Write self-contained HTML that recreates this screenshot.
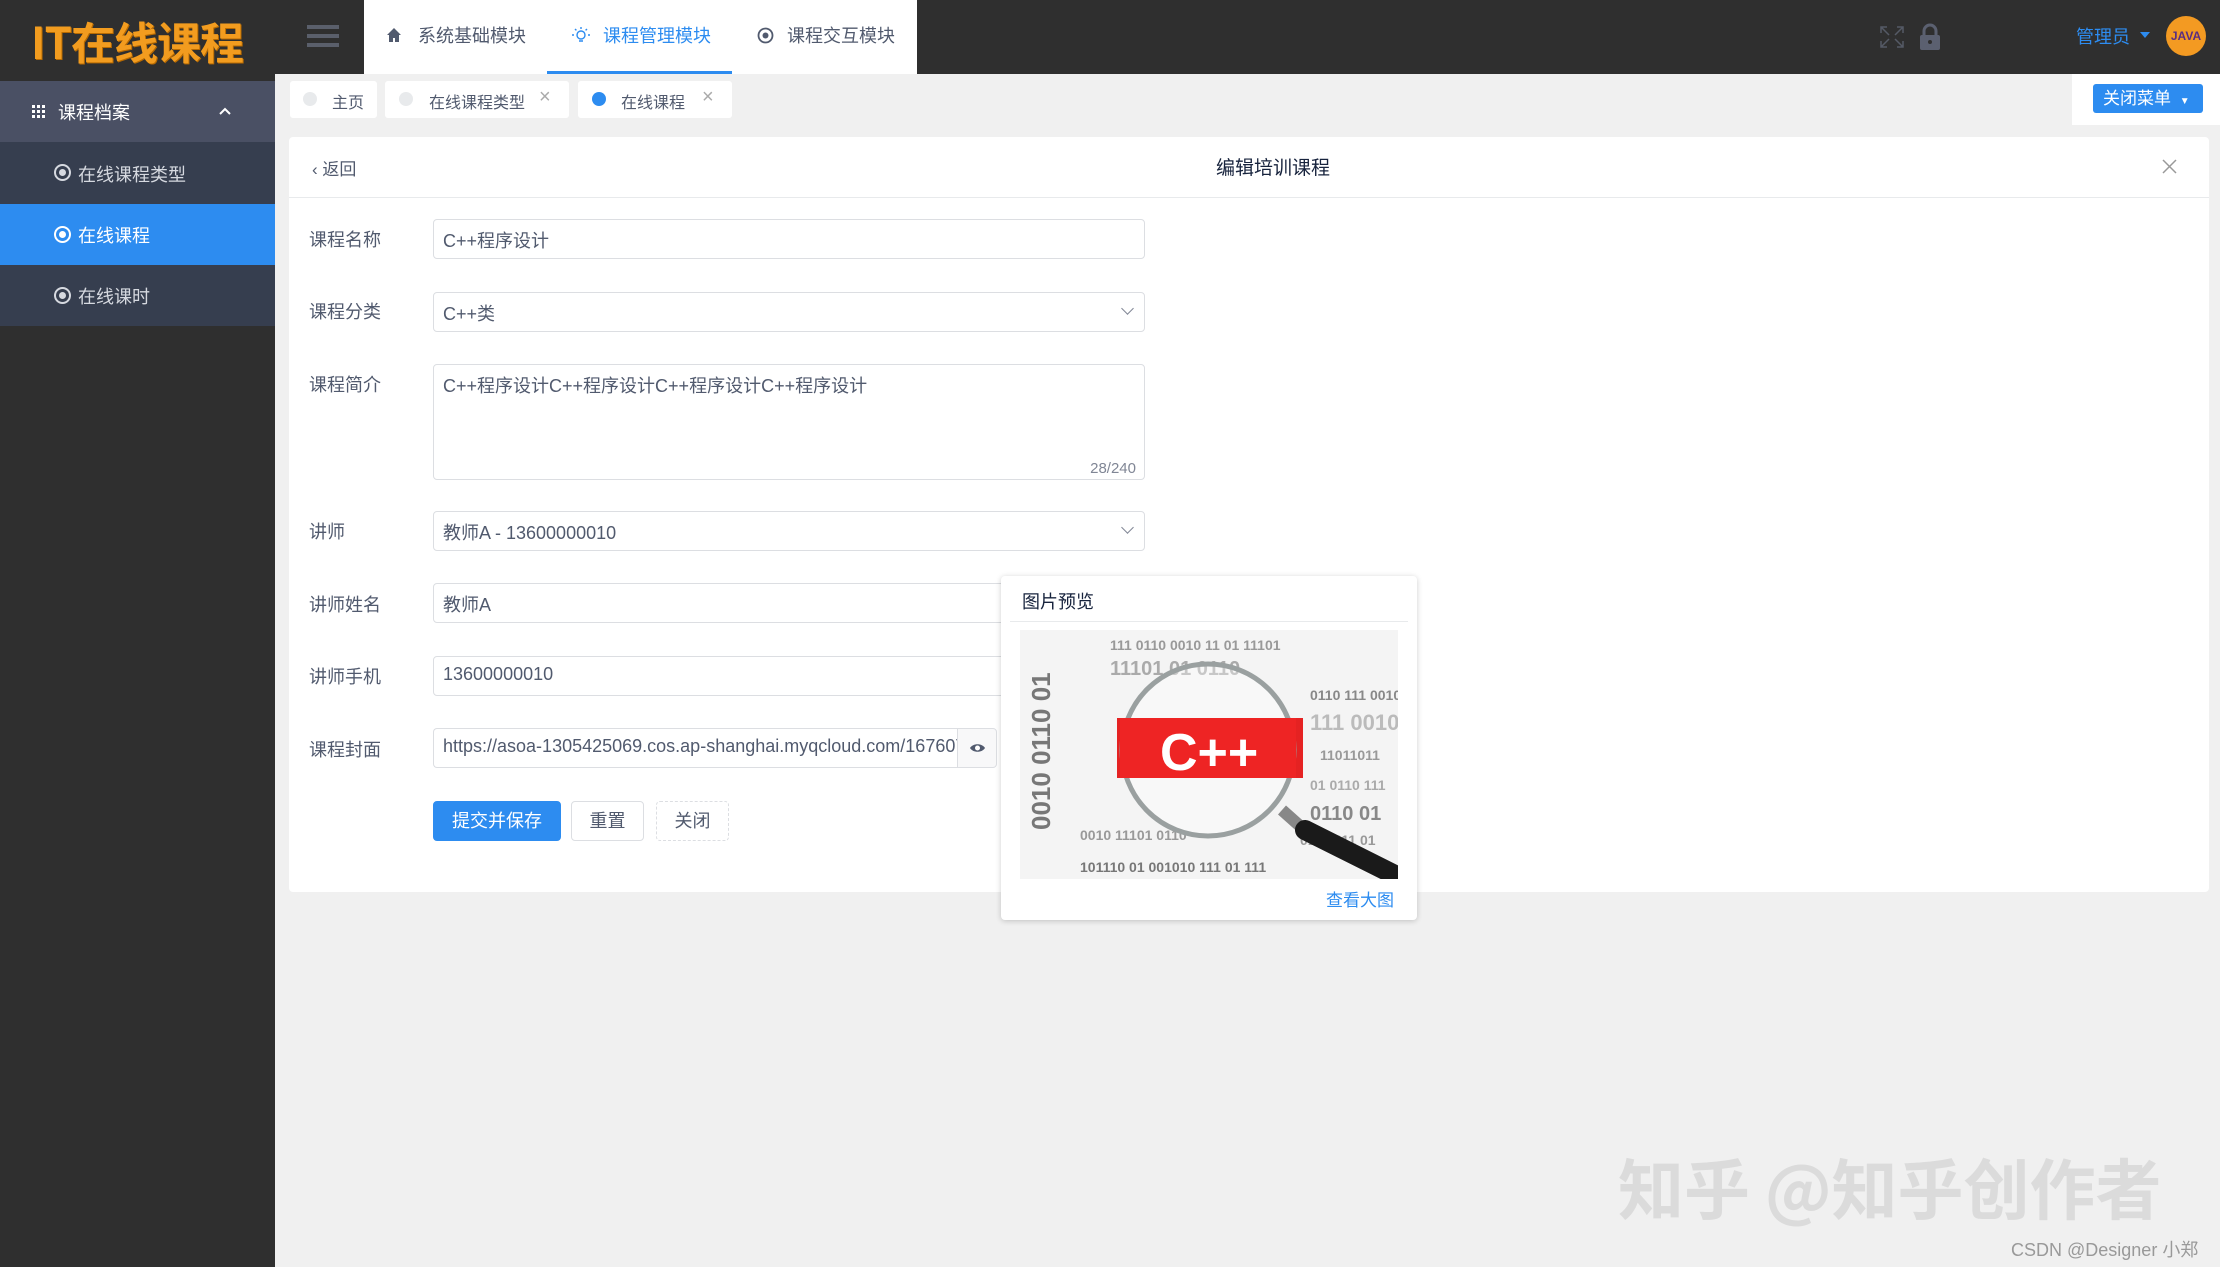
<!DOCTYPE html>
<html><head><meta charset="utf-8"><style>
*{box-sizing:border-box;margin:0;padding:0}
body{width:2220px;height:1267px;overflow:hidden;background:#f0f0f0;font-family:"Liberation Sans","Noto Sans CJK SC",sans-serif;position:relative;color:#515a6e}
.abs{position:absolute}
.hdr{left:0;top:0;width:2220px;height:74px;background:#2f2f2f}
.side{left:0;top:74px;width:275px;height:1193px;background:#2f2f2f}
.logo{left:31px;top:8px;font-size:44px;font-weight:bold;color:#f29c1f;letter-spacing:-1px;font-family:"Noto Sans CJK SC",sans-serif;text-shadow:1px 1px 0 #b86a00}
.nav{left:364px;top:0;width:553px;height:74px;background:#fff}
.nav span{position:absolute;top:22px;font-size:18px;color:#515a6e}
.menu{left:0;width:275px;color:#fff;font-size:18px}
.ic{position:absolute;left:54px;top:22px;width:17px;height:17px;border-radius:50%;border:2px solid currentColor}
.ic:after{content:"";position:absolute;left:3px;top:3px;width:7px;height:7px;border-radius:50%;background:currentColor}
.tab{top:81px;height:37px;background:#fff;border-radius:3px;font-size:16px;color:#515a6e}
.inp{left:433px;width:712px;height:40px;border:1px solid #dcdee2;border-radius:4px;background:#fff;font-size:18px;color:#515a6e;padding:7px 9px}
.lbl{left:309px;font-size:18px;color:#515a6e}
.dd{position:absolute;right:12px;top:11px;width:9px;height:9px;border-right:1.5px solid #808695;border-bottom:1.5px solid #808695;transform:rotate(45deg)}
.btn{top:801px;height:40px;border:1px solid #dcdee2;border-radius:4px;font-size:18px;text-align:center;line-height:38px;background:#fff;color:#515a6e}
</style></head><body>
<div class="abs hdr"></div>
<div class="abs side"></div>
<div class="abs logo">IT在线课程</div>
<div class="abs" style="left:307px;top:25px;width:32px;height:4px;background:#5a5f6b;box-shadow:0 9px 0 #5a5f6b,0 18px 0 #5a5f6b"></div>
<div class="abs nav">
 <svg style="position:absolute;left:22px;top:27px" width="16" height="16" viewBox="0 0 16 16"><path d="M8 1L1 8h2v7h4v-4h2v4h4V8h2z" fill="#515a6e"/></svg>
 <span style="left:54px">系统基础模块</span>
 <svg style="position:absolute;left:208px;top:26px" width="18" height="20" viewBox="0 0 18 20"><circle cx="9" cy="9" r="4" fill="none" stroke="#2d8cf0" stroke-width="1.4"/><path d="M7 15h4M9 1v2M2 9H0M18 9h-2M3 3l1.4 1.4M15 3l-1.4 1.4" stroke="#2d8cf0" stroke-width="1.4"/></svg>
 <span style="left:239px;color:#2d8cf0">课程管理模块</span>
 <div style="position:absolute;left:183px;top:71px;width:185px;height:3px;background:#2d8cf0"></div>
 <svg style="position:absolute;left:393px;top:27px" width="17" height="17" viewBox="0 0 17 17"><circle cx="8.5" cy="8.5" r="7" fill="none" stroke="#515a6e" stroke-width="1.8"/><circle cx="8.5" cy="8.5" r="3" fill="#515a6e"/></svg>
 <span style="left:423px">课程交互模块</span>
</div>
<svg class="abs" style="left:1879px;top:25px" width="26" height="24" viewBox="0 0 26 24"><path d="M2 8V2h6M24 8V2h-6M2 16v6h6M24 16v6h-6M2 2l8 8M24 2l-8 8M2 22l8-8M24 22l-8-8" stroke="#555a66" stroke-width="1.5" fill="none"/></svg>
<svg class="abs" style="left:1919px;top:23px" width="22" height="28" viewBox="0 0 22 28"><path d="M5 12V8a6 6 0 0 1 12 0v4" stroke="#5b6070" stroke-width="3" fill="none"/><rect x="1" y="12" width="20" height="15" rx="2" fill="#5b6070"/><circle cx="11" cy="19" r="2" fill="#2f2f2f"/></svg>
<div class="abs" style="left:2076px;top:23px;font-size:18px;color:#2d8cf0">管理员</div>
<div class="abs" style="left:2140px;top:32px;border:5px solid transparent;border-top:6px solid #2d8cf0"></div>
<div class="abs" style="left:2166px;top:16px;width:40px;height:40px;border-radius:50%;background:#f39a22;color:#5a2d82;font-size:12px;font-weight:bold;text-align:center;line-height:40px">JAVA</div>

<div class="abs menu" style="top:81px;height:61px;background:#4a5064"><svg style="position:absolute;left:32px;top:24px" width="13" height="13" viewBox="0 0 13 13" fill="#fff"><rect x="0" y="0" width="3" height="3"/><rect x="5" y="0" width="3" height="3"/><rect x="10" y="0" width="3" height="3"/><rect x="0" y="5" width="3" height="3"/><rect x="5" y="5" width="3" height="3"/><rect x="10" y="5" width="3" height="3"/><rect x="0" y="10" width="3" height="3"/><rect x="5" y="10" width="3" height="3"/><rect x="10" y="10" width="3" height="3"/></svg><span style="position:absolute;left:58px;top:18px">课程档案</span><svg style="position:absolute;left:219px;top:26px" width="12" height="8" viewBox="0 0 12 8"><path d="M1 7l5-5 5 5" stroke="#fff" stroke-width="2" fill="none"/></svg></div>
<div class="abs menu" style="top:142px;height:62px;background:#363e4f;color:#d6d9e0"><i class="ic"></i><span style="position:absolute;left:78px;top:19px">在线课程类型</span></div>
<div class="abs menu" style="top:204px;height:61px;background:#2d8cf0"><i class="ic"></i><span style="position:absolute;left:78px;top:18px">在线课程</span></div>
<div class="abs menu" style="top:265px;height:61px;background:#363e4f;color:#d6d9e0"><i class="ic"></i><span style="position:absolute;left:78px;top:18px">在线课时</span></div>

<div class="abs tab" style="left:290px;width:87px"><i class="abs" style="left:13px;top:11px;width:14px;height:14px;border-radius:50%;background:#e8eaec"></i><span class="abs" style="left:42px;top:8px">主页</span></div>
<div class="abs tab" style="left:385px;width:184px"><i class="abs" style="left:14px;top:11px;width:14px;height:14px;border-radius:50%;background:#e8eaec"></i><span class="abs" style="left:44px;top:8px">在线课程类型</span><span class="abs" style="left:154px;top:5px;color:#aaa;font-size:20px">×</span></div>
<div class="abs tab" style="left:578px;width:154px"><i class="abs" style="left:14px;top:11px;width:14px;height:14px;border-radius:50%;background:#2d8cf0"></i><span class="abs" style="left:43px;top:8px">在线课程</span><span class="abs" style="left:124px;top:5px;color:#aaa;font-size:20px">×</span></div>
<div class="abs" style="left:2072px;top:74px;width:148px;height:51px;background:#fff"></div>
<div class="abs" style="left:2093px;top:84px;width:110px;height:29px;background:#2d8cf0;border-radius:3px;color:#fff;font-size:17px;line-height:29px;padding-left:10px">关闭菜单 <span style="font-size:10px;margin-left:4px">▼</span></div>

<div class="abs" style="left:289px;top:137px;width:1920px;height:755px;background:#fff;border-radius:4px"></div>
<div class="abs" style="left:289px;top:197px;width:1920px;height:1px;background:#e8eaec"></div>
<div class="abs" style="left:312px;top:155px;font-size:17px;color:#515a6e">‹ 返回</div>
<div class="abs" style="left:1216px;top:153px;font-size:19px;color:#17233d">编辑培训课程</div>
<svg class="abs" style="left:2162px;top:159px" width="15" height="15" viewBox="0 0 15 15"><path d="M1 1l13 13M14 1L1 14" stroke="#999" stroke-width="1.5"/></svg>

<div class="abs lbl" style="top:226px">课程名称</div><div class="abs inp" style="top:219px">C++程序设计</div>
<div class="abs lbl" style="top:298px">课程分类</div><div class="abs inp" style="top:292px">C++类<i class="dd"></i></div>
<div class="abs lbl" style="top:371px">课程简介</div><div class="abs inp" style="top:364px;height:116px">C++程序设计C++程序设计C++程序设计C++程序设计<span class="abs" style="right:8px;bottom:2px;font-size:15px;color:#808695">28/240</span></div>
<div class="abs lbl" style="top:518px">讲师</div><div class="abs inp" style="top:511px">教师A - 13600000010<i class="dd"></i></div>
<div class="abs lbl" style="top:591px">讲师姓名</div><div class="abs inp" style="top:583px">教师A</div>
<div class="abs lbl" style="top:663px">讲师手机</div><div class="abs inp" style="top:656px">13600000010</div>
<div class="abs lbl" style="top:736px">课程封面</div><div class="abs inp" style="top:728px;width:525px;white-space:nowrap;overflow:hidden;border-radius:4px 0 0 4px;border-right:none">https://asoa-1305425069.cos.ap-shanghai.myqcloud.com/167607</div>
<div class="abs" style="left:957px;top:728px;width:40px;height:40px;border:1px solid #dcdee2;background:#f8f8f9;border-radius:0 4px 4px 0">
<svg style="position:absolute;left:11px;top:13px" width="17" height="12" viewBox="0 0 17 12"><path d="M1 6C4 1 13 1 16 6C13 11 4 11 1 6z" fill="#515a6e"/><circle cx="8.5" cy="6" r="2.5" fill="#fff"/></svg></div>
<div class="abs btn" style="left:433px;width:128px;background:#2d8cf0;border-color:#2d8cf0;color:#fff">提交并保存</div>
<div class="abs btn" style="left:571px;width:73px">重置</div>
<div class="abs btn" style="left:656px;width:73px;border-style:dashed">关闭</div>

<div class="abs" style="left:1001px;top:576px;width:416px;height:344px;background:#fff;border-radius:4px;box-shadow:0 1px 6px rgba(0,0,0,.2)"></div>
<div class="abs" style="left:1022px;top:588px;font-size:18px;color:#17233d">图片预览</div>
<div class="abs" style="left:1010px;top:621px;width:398px;height:1px;background:#e8eaec"></div>
<svg class="abs" style="left:1020px;top:630px" width="378" height="249" viewBox="0 0 378 249">
<rect width="378" height="249" fill="#f4f4f4"/>
<g font-family="Liberation Sans" font-weight="bold" fill="#999" font-size="14">
<g transform="rotate(-90 20 120)"><text x="-60" y="20" font-size="22" fill="#aaa">000101 1110</text><text x="-60" y="45" font-size="18" fill="#888">11100100110</text><text x="-60" y="130" font-size="26" fill="#777">0010 0110 01</text></g>
<text x="90" y="20">111 0110 0010 11 01 11101</text>
<text x="90" y="45" font-size="20" fill="#aaa">11101 01 0110</text>
<text x="290" y="70" fill="#888">0110 111 0010</text>
<text x="290" y="100" font-size="22" fill="#bbb">111 0010</text>
<text x="300" y="130">11011011</text>
<text x="290" y="160" fill="#aaa">01 0110 111</text>
<text x="290" y="190" font-size="20" fill="#888">0110 01</text>
<text x="280" y="215">0110 111 01</text>
<text x="60" y="242" fill="#777">101110 01 001010 111 01 111</text>
<text x="60" y="210" fill="#999">0010 11101 0110</text>
</g>
<rect x="97" y="88" width="186" height="60" fill="#e52222"/>
<circle cx="188" cy="120" r="86" fill="rgba(255,255,255,.35)" stroke="#9aa0a0" stroke-width="5"/>
<rect x="100" y="88" width="176" height="60" fill="#ee2424"/>
<text x="140" y="140" font-family="Liberation Sans" font-weight="bold" font-size="52" fill="#fff">C++</text>
<path d="M262 180L290 205" stroke="#888" stroke-width="12"/>
<path d="M285 200L375 245" stroke="#1a1a1a" stroke-width="20" stroke-linecap="round"/>
</svg>
<div class="abs" style="left:1326px;top:886px;font-size:17px;color:#2d8cf0">查看大图</div>

<div class="abs" style="left:1618px;top:1138px;font-size:66px;font-weight:bold;color:rgba(215,215,215,.85);font-family:'Noto Sans CJK SC',sans-serif">知乎 @知乎创作者</div>
<div class="abs" style="left:2011px;top:1236px;font-size:18px;color:#999">CSDN @Designer 小郑</div>
</body></html>
